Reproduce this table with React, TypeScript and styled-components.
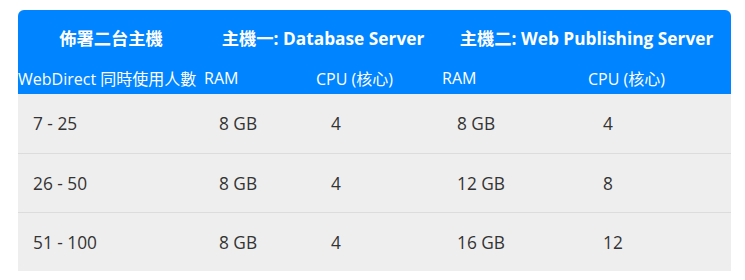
import React from 'react'
import styled, { createGlobalStyle } from 'styled-components'

const GlobalStyle = createGlobalStyle`
    body {
        margin: 0;
        background: #fff;
        font-family: "Open Sans", "Noto Sans CJK TC", sans-serif;
    }
`

const rows = [
    ['7 - 25', '8 GB', '4', '8 GB', '4'],
    ['26 - 50', '8 GB', '4', '12 GB', '8'],
    ['51 - 100', '8 GB', '4', '16 GB', '12'],
]

const widths = [186, 112, 126, 146, 143]

const App = () => {
    return (
        <Page>
            <GlobalStyle />
            <Table>
                <colgroup>
                    {widths.map((w, i) => <col key={i} style={{ width: w }} />)}
                </colgroup>
                <thead>
                    <TopRow>
                        <GroupCell>佈署二台主機</GroupCell>
                        <GroupCell colSpan={2}>主機一: Database Server</GroupCell>
                        <GroupCell colSpan={2}>主機二: Web Publishing Server</GroupCell>
                    </TopRow>
                    <tr>
                        <LabelCell>WebDirect 同時使用人數</LabelCell>
                        <LabelCell>RAM</LabelCell>
                        <LabelCell>CPU (核心)</LabelCell>
                        <LabelCell>RAM</LabelCell>
                        <LabelCell>CPU (核心)</LabelCell>
                    </tr>
                </thead>
                <tbody>
                    {rows.map((r, i) => (
                        <BodyRow key={i}>
                            {r.map((c, j) => <Cell key={j}>{c}</Cell>)}
                        </BodyRow>
                    ))}
                </tbody>
            </Table>
        </Page>
    )
}

export default App

const Page = styled.div`
    padding: 10px 14px 0 18px;
`
const Table = styled.table`
    width: 713px;
    table-layout: fixed;
    border-collapse: separate;
    border-spacing: 0;
    background: #eee;
    border-radius: 6px 6px 0 0;
    overflow: hidden;
`
const TopRow = styled.tr`
    height: 56px;
`
const GroupCell = styled.th`
    background: #0084ff;
    color: #fff;
    font-size: 17.3px;
    font-weight: bold;
    text-align: center;
    padding: 0 0 1px;
    white-space: nowrap;
`
const LabelCell = styled.th`
    background: #0084ff;
    color: #fff;
    font-size: 16px;
    font-weight: normal;
    text-align: left;
    padding: 0 0 4px;
    height: 21px;
    white-space: nowrap;
`
const BodyRow = styled.tr`
    height: 59px;
    & + & td {
        border-top: 1px solid #dcdcdc;
    }
`
const Cell = styled.td`
    color: #333;
    font-size: 17.3px;
    padding: 0 0 0 15px;
    vertical-align: middle;
`
